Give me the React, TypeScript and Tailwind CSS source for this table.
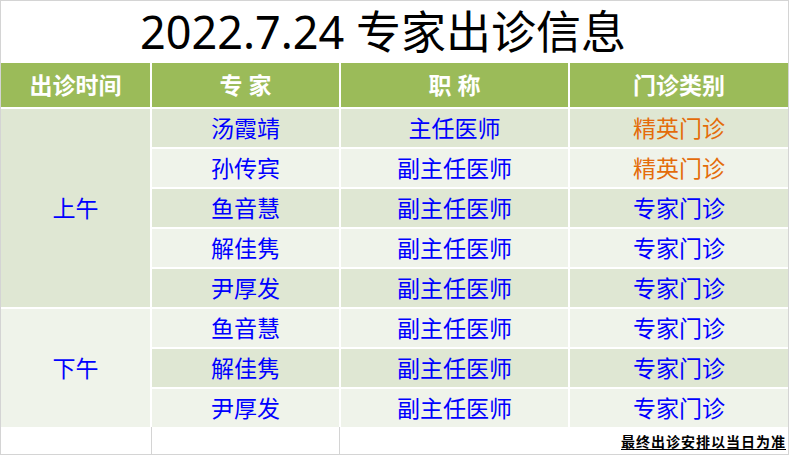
const rows = [
  { name: '汤霞靖', title: '主任医师', type: '精英门诊', elite: true },
  { name: '孙传宾', title: '副主任医师', type: '精英门诊', elite: true },
  { name: '鱼音慧', title: '副主任医师', type: '专家门诊', elite: false },
  { name: '解佳隽', title: '副主任医师', type: '专家门诊', elite: false },
  { name: '尹厚发', title: '副主任医师', type: '专家门诊', elite: false },
  { name: '鱼音慧', title: '副主任医师', type: '专家门诊', elite: false },
  { name: '解佳隽', title: '副主任医师', type: '专家门诊', elite: false },
  { name: '尹厚发', title: '副主任医师', type: '专家门诊', elite: false },
];

const font = { fontFamily: '"Noto Sans", "Noto Sans CJK SC", sans-serif' };

export default function App() {
  return (
    <div
      className="w-[789px] h-[455px] border border-[#d4d4d4] bg-white flex flex-col overflow-hidden"
      style={font}
    >
      {/* Title */}
      <div className="h-[62px] flex items-center justify-center pr-[23px] pb-[2px] text-[45px] leading-none text-black">
        2022.7.24 专家出诊信息
      </div>

      {/* Table */}
      <div className="grid grid-cols-[149px_187px_227px_1fr] grid-rows-[44px] auto-rows-[38px] gap-[2px] bg-white">
        {['出诊时间', '专 家', '职 称', '门诊类别'].map((h) => (
          <div
            key={h}
            className="bg-[#9bbb59] text-white font-bold text-[23px] flex items-center justify-center whitespace-pre"
          >
            {h}
          </div>
        ))}

        <div className="row-span-5 col-start-1 row-start-2 bg-[#dfe7d3] text-[#0000ff] text-[23px] flex items-center justify-center">
          上午
        </div>
        <div className="row-span-3 col-start-1 row-start-7 bg-[#eff3ea] text-[#0000ff] text-[23px] flex items-center justify-center">
          下午
        </div>

        {rows.map((r, i) => {
          const bg = i % 2 === 0 ? 'bg-[#dfe7d3]' : 'bg-[#eff3ea]';
          return [
            <div key={`n${i}`} className={`${bg} col-start-2 text-[#0000ff] text-[23px] flex items-center justify-center`}>
              {r.name}
            </div>,
            <div key={`t${i}`} className={`${bg} text-[#0000ff] text-[23px] flex items-center justify-center`}>
              {r.title}
            </div>,
            <div
              key={`c${i}`}
              className={`${bg} text-[23px] flex items-center justify-center ${r.elite ? 'text-[#e46c0a]' : 'text-[#0000ff]'}`}
            >
              {r.type}
            </div>,
          ];
        })}
      </div>

      {/* Footer */}
      <div className="flex-1 grid grid-cols-[151px_188px_1fr]">
        <div className="border-r border-[#d4d4d4]" />
        <div className="border-r border-[#d4d4d4]" />
        <div className="flex items-center justify-end pr-[2px] pt-[2px]">
          <span className="text-[14px] font-bold text-black underline underline-offset-2 tracking-[1px] leading-none">
            最终出诊安排以当日为准
          </span>
        </div>
      </div>
    </div>
  );
}
